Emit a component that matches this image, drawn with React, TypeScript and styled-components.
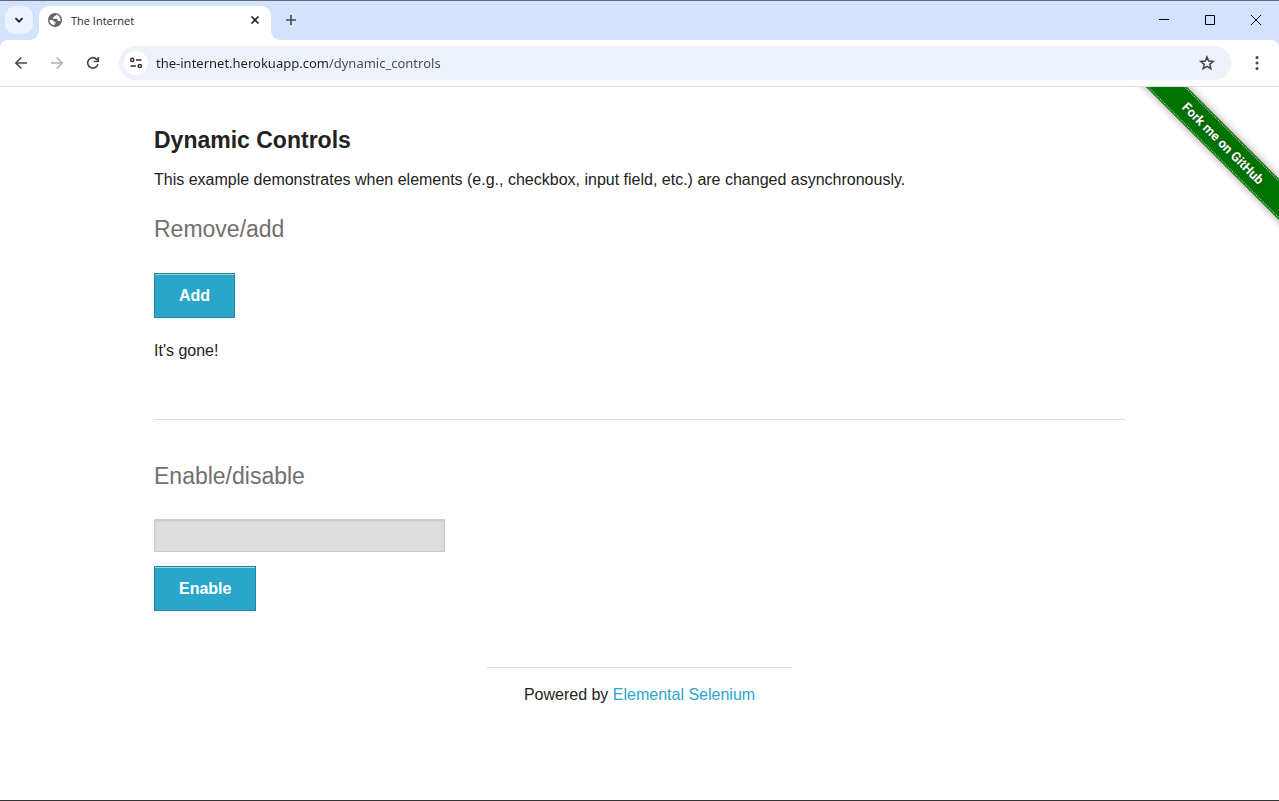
import React from "react";
import styled, { createGlobalStyle } from "styled-components";

const GlobalStyle = createGlobalStyle`
  *, *::before, *::after { box-sizing: border-box; }
  html, body, #root { height: 100%; }
  body {
    margin: 0;
    background: #fff;
    color: #222;
    font-family: "Liberation Sans", Arial, Helvetica, sans-serif;
    font-size: 16px;
    line-height: 26px;
  }
  button, input { font-family: inherit; margin: 0; }
`;

const Window = styled.div`
  min-height: 100%;
  display: flex;
  flex-direction: column;
  border-top: 1px solid #62677a;
  border-bottom: 1px solid #333;
`;

const TabStrip = styled.div`
  display: flex;
  align-items: flex-start;
  height: 39px;
  padding: 5px 0 0 5px;
  background: #d3e3fd;
`;

const IconButton = styled.button<{ $size?: number; $color?: string; $bg?: string; $radius?: number }>`
  display: flex;
  align-items: center;
  justify-content: center;
  flex: none;
  width: ${(p) => p.$size ?? 28}px;
  height: ${(p) => p.$size ?? 28}px;
  padding: 0;
  border: 0;
  border-radius: ${(p) => p.$radius ?? 14}px;
  background: ${(p) => p.$bg ?? "transparent"};
  color: ${(p) => p.$color ?? "#474747"};
`;

const Tab = styled.div`
  position: relative;
  display: flex;
  align-items: center;
  gap: 8px;
  width: 232px;
  height: 34px;
  margin: 0 6px;
  padding: 0 6px 6px 8px;
  background: #fff;
  border-radius: 10px 10px 0 0;

  &::before,
  &::after {
    content: "";
    position: absolute;
    bottom: 0;
    width: 10px;
    height: 10px;
  }
  &::before {
    right: 100%;
    background: radial-gradient(circle at 0 0, transparent 10px, #fff 10px);
  }
  &::after {
    left: 100%;
    background: radial-gradient(circle at 100% 0, transparent 10px, #fff 10px);
  }
`;

const TabTitle = styled.span`
  flex: 1;
  padding-top: 1px;
  font-family: "Open Sans", "Noto Sans", sans-serif;
  font-size: 11px;
  line-height: 16px;
  color: #1f1f1f;
`;

const WindowControls = styled.div`
  display: flex;
  margin-left: auto;
`;

const WindowButton = styled.button`
  display: flex;
  align-items: center;
  justify-content: center;
  width: 46px;
  height: 28px;
  padding: 0;
  border: 0;
  background: transparent;
  color: #000;
`;

const ToolbarBack = styled.div`
  background: #d3e3fd;
`;

const Toolbar = styled.div`
  display: flex;
  align-items: center;
  height: 47px;
  padding: 0 8px 0 7px;
  background: #fff;
  border-bottom: 1px solid #dfdfdf;
  border-radius: 8px 8px 0 0;
`;

const NavButtons = styled.div`
  display: flex;
  gap: 8px;
  margin-right: 12px;
`;

const AddressBar = styled.div`
  flex: 1;
  display: flex;
  align-items: center;
  gap: 8px;
  height: 34px;
  margin-right: 12px;
  padding: 0 10px 0 5px;
  border-radius: 17px;
  background: #ecf1fa;
`;

const AddressInput = styled.input`
  flex: 1;
  min-width: 0;
  height: 24px;
  padding: 0;
  border: 0;
  outline: 0;
  font-family: "Noto Sans", "Open Sans", sans-serif;
  font-size: 13px;
  background: linear-gradient(to right, #1f1f1f 173px, #474747 173px);
  background-clip: text;
  -webkit-background-clip: text;
  color: transparent;
`;

const Page = styled.div`
  position: relative;
  flex: 1;
  padding: 37px 15px 24px;
  overflow: hidden;
`;

const Content = styled.main`
  max-width: 971px;
  margin: 0 auto;
`;

const Title = styled.h4`
  margin: 0 0 11px;
  font-size: 23px;
  line-height: 32px;
  font-weight: 700;
`;

const Subheading = styled.h4`
  margin: 0;
  padding-bottom: 27px;
  font-size: 23px;
  line-height: 32px;
  font-weight: 400;
  color: #6f6f6f;
`;

const Paragraph = styled.p`
  margin: 0 0 20px;
`;

const Message = styled.p`
  margin: 20px 0 0;
`;

const Divider = styled.hr`
  margin: 55px 0 40px;
  border: 0;
  border-top: 1px solid #ddd;
`;

const ActionButton = styled.button`
  display: block;
  height: 45px;
  margin-top: 1px;
  padding: 0 24px;
  border: 1px solid #2284a1;
  background: #2ba6cb;
  box-shadow: inset 0 1px 0 rgba(255, 255, 255, 0.5);
  color: #fff;
  font-size: 16px;
  line-height: 16px;
  font-weight: 700;
`;

const TextField = styled.input`
  display: block;
  width: 30%;
  height: 33px;
  margin-bottom: 14px;
  padding: 6px;
  border: 1px solid #ccc;
  border-radius: 0;
  background: #ddd;
  box-shadow: inset 0 1px 2px rgba(0, 0, 0, 0.1);
`;

const Footer = styled.footer`
  width: 305px;
  margin: 56px auto 0;
  padding-top: 14px;
  border-top: 1px solid #ddd;
  text-align: center;

  a { color: #2ba6cb; text-decoration: none; }
`;

const RibbonCorner = styled.a`
  position: absolute;
  top: 0;
  right: 0;
  width: 149px;
  height: 149px;
  overflow: hidden;
`;

const RibbonBand = styled.span`
  position: absolute;
  top: 42px;
  left: -12px;
  display: flex;
  flex-direction: column;
  justify-content: space-between;
  width: 210px;
  height: 29px;
  padding: 1px 0;
  background: #007200;
  box-shadow: 0 0 8px rgba(0, 0, 0, 0.4);
  transform: rotate(45deg);
  color: #fff;
  font-family: Roboto, "Open Sans", sans-serif;
  font-size: 13px;
  line-height: 25px;
  font-weight: 700;
  text-align: center;
  text-shadow: 0 0 3px rgba(0, 0, 0, 0.4);

  &::before,
  &::after {
    content: "";
    border-top: 1px dotted rgba(255, 255, 255, 0.75);
  }
`;

const Line = ({ size, d, width = 1.6 }: { size: number; d: string; width?: number }) => (
  <svg width={size} height={size} viewBox={`0 0 ${size} ${size}`} fill="none" stroke="currentColor" strokeWidth={width} aria-hidden="true">
    <path d={d} />
  </svg>
);

const Globe = () => (
  <svg width="16" height="16" viewBox="0 0 16 16" aria-hidden="true">
    <circle cx="8" cy="8" r="7" fill="#5f6368" />
    <path
      d="M9.2 2.5c-.2 1.1-.6 1.3-1.7 1.4-.3 1-.8 1.3-1.7 1.4v1.5h3.4c.9 0 1.4.6 1.4 1.4v.9h1.5c.7 0 .9.5.9 1.1a5.6 5.6 0 0 0-3.8-7.7zM2.4 7.7c1.2 0 2.7.2 3.5.5.8.3.8 1 .8 1.6h1.4c.5 0 .6.5.6.9 0 .7-.6.8-1.2.9v1.9A5.7 5.7 0 0 1 2.4 7.7z"
      fill="#fff"
    />
  </svg>
);

const Reload = () => (
  <svg width="16" height="16" viewBox="0 0 16 16" fill="none" stroke="currentColor" strokeWidth="1.6" aria-hidden="true">
    <path d="M12.9 9.2A5.2 5.2 0 1 1 11.8 4.4L13.2 6" />
    <path d="M13.3 2v4.5H8.8" />
  </svg>
);

const Tune = () => (
  <svg width="16" height="16" viewBox="0 0 16 16" fill="none" stroke="currentColor" strokeWidth="1.5" aria-hidden="true">
    <circle cx="4.2" cy="4.9" r="1.6" />
    <path d="M8 4.9h5.5M2.5 11h5.5" />
    <circle cx="11.8" cy="11" r="1.6" />
  </svg>
);

const Star = () => (
  <svg width="18" height="18" viewBox="0 0 18 18" fill="none" stroke="currentColor" strokeWidth="1.6" aria-hidden="true">
    <path d="M9 3l1.7 4.1 4.4.4-3.3 2.9 1 4.3L9 12.4l-3.8 2.3 1-4.3-3.3-2.9 4.4-.4z" />
  </svg>
);

const Dots = () => (
  <svg width="16" height="16" viewBox="0 0 16 16" fill="currentColor" aria-hidden="true">
    <circle cx="8" cy="2.5" r="1.5" />
    <circle cx="8" cy="8" r="1.5" />
    <circle cx="8" cy="13.5" r="1.5" />
  </svg>
);

export default function App() {
  return (
    <>
      <GlobalStyle />
      <Window>
        <TabStrip>
          <IconButton $bg="#ecf2fe" $radius={10} $color="#1f1f1f" aria-label="Search tabs">
            <Line size={16} d="M4.5 6.2L8 9.7l3.5-3.5" width={1.8} />
          </IconButton>
          <Tab>
            <Globe />
            <TabTitle>The Internet</TabTitle>
            <IconButton $size={20} $color="#1f1f1f" aria-label="Close tab">
              <Line size={16} d="M4.5 4.5l7 7M11.5 4.5l-7 7" />
            </IconButton>
          </Tab>
          <IconButton aria-label="New tab">
            <Line size={16} d="M8 3v10M3 8h10" />
          </IconButton>
          <WindowControls>
            <WindowButton aria-label="Minimize">
              <Line size={12} d="M1 5.5h10" width={1} />
            </WindowButton>
            <WindowButton aria-label="Maximize">
              <Line size={12} d="M1.5 1.5h9v9h-9z" width={1} />
            </WindowButton>
            <WindowButton aria-label="Close">
              <Line size={12} d="M1 1l10 10M11 1L1 11" width={1} />
            </WindowButton>
          </WindowControls>
        </TabStrip>
        <ToolbarBack>
          <Toolbar>
            <NavButtons>
              <IconButton aria-label="Back">
                <Line size={16} d="M14 8H3M8.2 2.5L2.8 8l5.4 5.5" />
              </IconButton>
              <IconButton $color="#b0b0b0" aria-label="Forward">
                <Line size={16} d="M2 8h11M7.8 2.5L13.2 8l-5.4 5.5" />
              </IconButton>
              <IconButton aria-label="Reload">
                <Reload />
              </IconButton>
            </NavButtons>
            <AddressBar>
              <IconButton $size={24} $bg="#fff" $color="#303030" aria-label="View site information">
                <Tune />
              </IconButton>
              <AddressInput aria-label="Address" defaultValue="the-internet.herokuapp.com/dynamic_controls" />
              <IconButton aria-label="Bookmark this tab">
                <Star />
              </IconButton>
            </AddressBar>
            <IconButton aria-label="Menu">
              <Dots />
            </IconButton>
          </Toolbar>
        </ToolbarBack>
        <Page>
          <Content>
            <Title>Dynamic Controls</Title>
            <Paragraph>
              This example demonstrates when elements (e.g., checkbox, input field, etc.) are changed asynchronously.
            </Paragraph>
            <Subheading>Remove/add</Subheading>
            <ActionButton type="button">Add</ActionButton>
            <Message>It's gone!</Message>
            <Divider />
            <Subheading>Enable/disable</Subheading>
            <TextField type="text" aria-label="Text" disabled />
            <ActionButton type="button">Enable</ActionButton>
          </Content>
          <Footer>
            Powered by <a href="#elemental-selenium">Elemental Selenium</a>
          </Footer>
          <RibbonCorner href="#github">
            <RibbonBand>Fork me on GitHub</RibbonBand>
          </RibbonCorner>
        </Page>
      </Window>
    </>
  );
}
